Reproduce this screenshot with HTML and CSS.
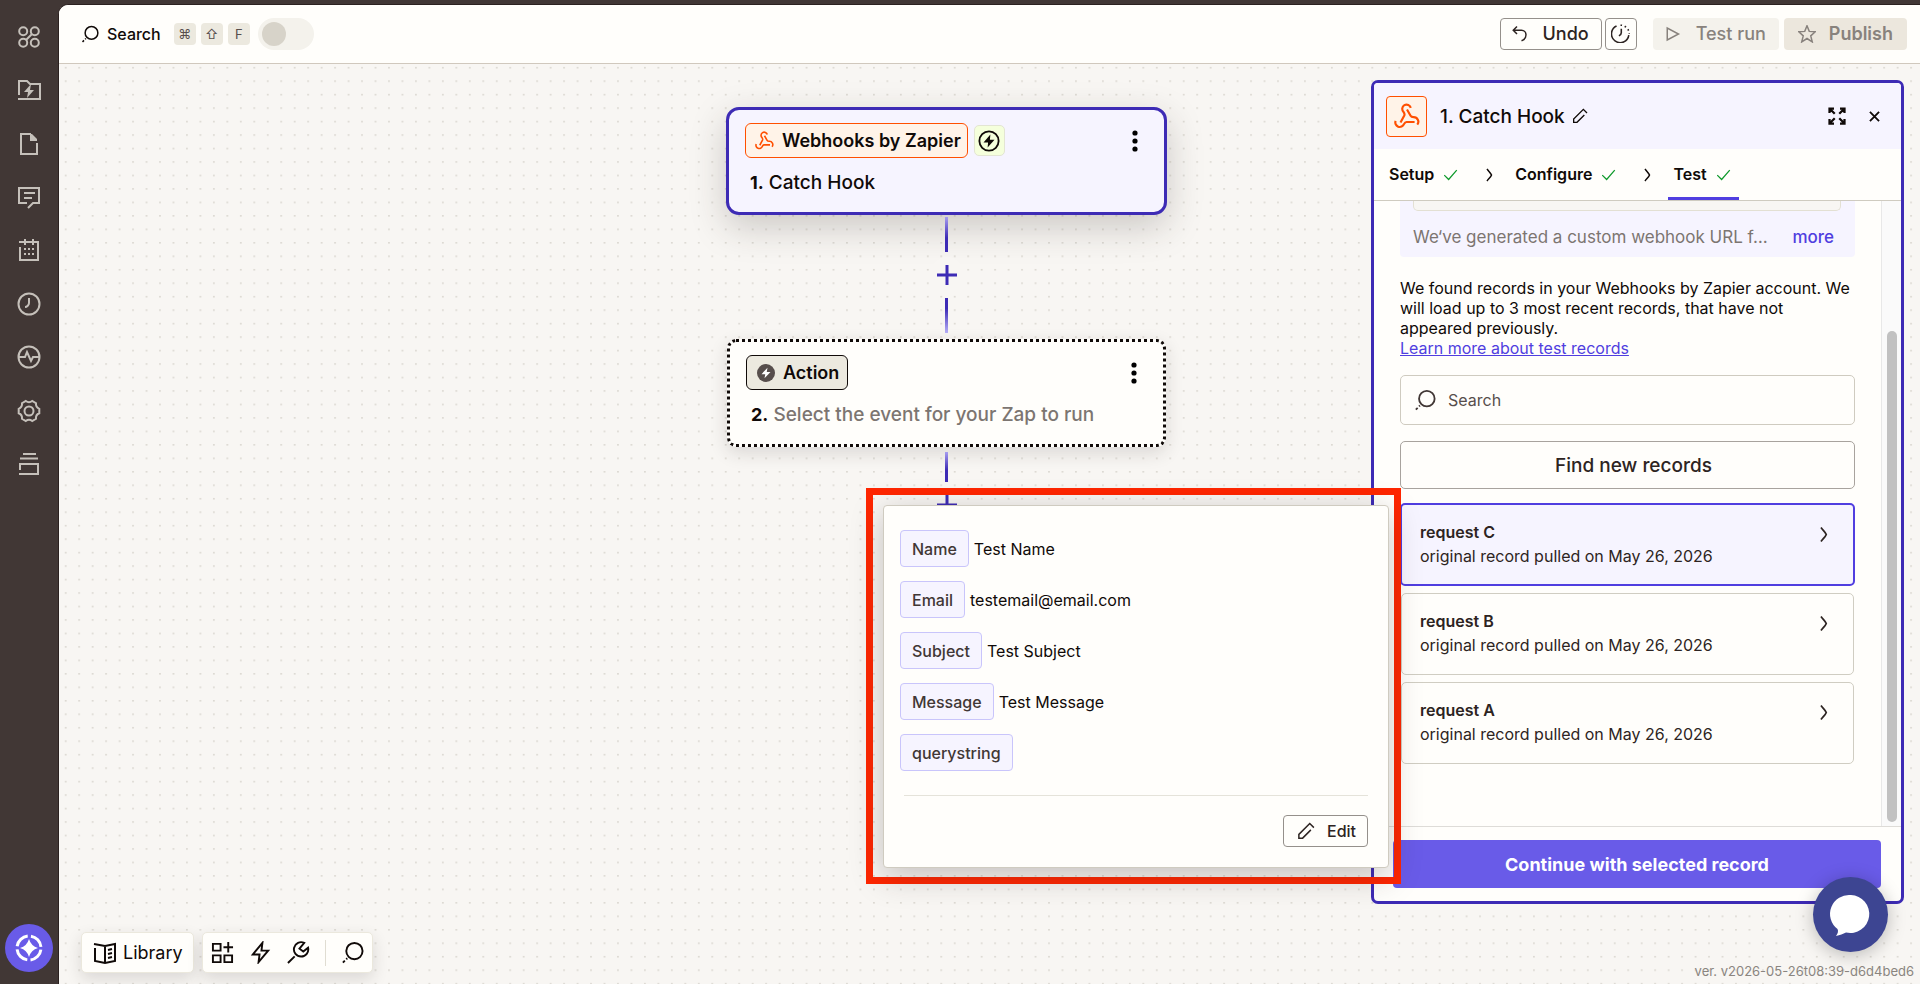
FILE: index.html
```html
<!DOCTYPE html>
<html lang="en">
  <head>
    <meta charset="utf-8" />
    <meta name="viewport" content="width=device-width, initial-scale=1" />
    <title>Zap editor</title>
    <link rel="stylesheet" href="styles.css">
  </head>
  <body>
    <!-- shared icons -->
    <svg class="sprite" aria-hidden="true">
      <symbol id="i-search" viewBox="0 0 24 24">
        <circle cx="14" cy="10.500" r="8.500" /><path d="M2 22.500l2-2M5.500 19l1-1" />
      </symbol>
      <symbol id="i-check" viewBox="0 0 24 24"><path d="M2 13l7 7L22 5" /></symbol>
      <symbol id="i-chevron" viewBox="0 0 24 24"><path d="M8 4c2 3 5 5 6 8-1 3-4 5-6 8" /></symbol>
      <symbol id="i-pencil" viewBox="0 0 24 24">
        <path d="M22.500 7.500l-5.500-5.500L2.500 16.500v5h5L18.500 10.500" />
      </symbol>
      <symbol id="i-plus" viewBox="0 0 20 20"><path d="M10 0v20M0 10h20" /></symbol>
      <symbol id="i-dots" viewBox="0 0 6 22">
        <circle cx="3" cy="3" r="2.600" /><circle cx="3" cy="11" r="2.600" /><circle cx="3" cy="19" r="2.600" />
      </symbol>
      <symbol id="i-webhook" viewBox="0 0 24 24">
        <path d="M19 17.500h-7.500c-1 0-1.800 1-2.300 2A4 4 0 0 1 1.500 16.500" />
        <path d="M6 18l3.500-6.500c.5-1 0-2.200-.6-3.100A4 4 0 1 1 15.500 4.500" />
        <path d="M12 6l3.300 5.800c.5.900 1.700 1.200 2.700 1.200a4.300 4.300 0 0 1 3.500 7" />
      </symbol>
    </svg>

    <div class="app">
      <aside class="sidebar">
        <nav class="sidebar-nav">
          <a href="#" aria-label="Home">
            <svg class="icon" viewBox="0 0 24 24"><circle cx="6.200" cy="6.200" r="4" /><circle cx="17.800" cy="6.200" r="4" /><circle cx="6.200" cy="17.800" r="4" /><circle cx="17.800" cy="17.800" r="4" /><path d="M9 15l6-6" /></svg>
          </a>
          <a href="#" aria-label="Zaps">
            <svg class="icon" viewBox="0 0 24 24"><path d="M2 17V3h8l3 3h10v15H1" /><path class="solid" d="M14 6l-7 8h4l-1 6 7-8h-4z" /></svg>
          </a>
          <a href="#" aria-label="Drafts">
            <svg class="icon" viewBox="0 0 24 24"><path d="M20 11v11H4V2h10" /><path class="solid" d="M13 2h2l5 5v2h-7z" /></svg>
          </a>
          <a href="#" aria-label="Comments">
            <svg class="icon" viewBox="0 0 24 24"><path d="M10 18H2V3h20v15h-6l-5 5M7 8h11M7 13h8" /></svg>
          </a>
          <a href="#" aria-label="Schedule">
            <svg class="icon" viewBox="0 0 24 24"><path d="M3 9V22h18V4H2M8 1v6M16 1v6" /><path d="M7 11h2M11 11h2M15 11h2M7 16h2M11 16h2M15 16h2" /></svg>
          </a>
          <a href="#" aria-label="History">
            <svg class="icon" viewBox="0 0 24 24"><circle cx="12" cy="12" r="10.500" /><path d="M12 6v5c0 2-2 4-4 4" /></svg>
          </a>
          <a href="#" aria-label="Activity">
            <svg class="icon" viewBox="0 0 24 24"><circle cx="12" cy="12" r="10.500" /><path d="M2 12h6l2-5 4 9 2-4h6" /></svg>
          </a>
          <a href="#" aria-label="Settings">
            <svg class="icon" viewBox="0 0 24 24"><circle cx="12" cy="12" r="4.500" /><path d="M22.300 9.800v4.400Q18.500 15.700 19 19.800L15.200 22Q12 19.500 8.800 22L5 19.800Q5.500 15.700 1.700 14.200V9.800Q5.500 8.200 5 4.200L8.800 2Q12 4.500 15.200 2L19 4.200Q18.500 8.200 22.300 9.800z" /></svg>
          </a>
          <a href="#" aria-label="Archive">
            <svg class="icon" viewBox="0 0 24 24"><path d="M6 2h13M3 6.500h18M3 18v-6h18v10H2" /></svg>
          </a>
        </nav>
        <button class="assistant" aria-label="Assistant">
          <svg viewBox="0 0 28 28"><circle cx="14" cy="14" r="12" fill="none" stroke="currentColor" stroke-width="3" stroke-dasharray="15.500 3.350" stroke-dashoffset="-1.650" /><path fill="currentColor" d="M14 5q2 7 9 9-7 2-9 9-2-7-9-9 7-2 9-9z" /></svg>
        </button>
      </aside>

      <main class="main">
        <header class="topbar">
          <button class="find">
            <svg class="icon"><use href="#i-search" /></svg>
            Search
          </button>
          <div class="keys"><kbd>⌘</kbd><kbd>⇧</kbd><kbd>F</kbd></div>
          <input class="toggle" type="checkbox" aria-label="Publish Zap" />
          <div class="actions">
            <button class="btn outline undo">
              <svg class="icon" viewBox="0 0 24 24"><path d="M8 2L3 7l5 5M3 7h11a6 6 0 0 1 6 6c0 4-3 7-6 8" /></svg>
              Undo
            </button>
            <button class="btn outline square" aria-label="Version history">
              <svg class="icon" viewBox="0 0 24 24"><path d="M7 2.500A11 11 0 1 0 22.500 14" /><path d="M13 6v5c0 2-1 3-3 4" /><path stroke-dasharray="2 3.500" d="M12 1.500a11 11 0 0 1 11 11" /></svg>
            </button>
            <button class="btn test" disabled>
              <svg class="icon" viewBox="0 0 24 24"><path d="M3 4v16l15-8z" /></svg>
              Test run
            </button>
            <button class="btn publish" disabled>
              <svg class="icon" viewBox="0 0 24 24"><path d="M12 1l3 7.500 8 .5-6 5.500 2 8-7-4.500-7 4.500 2-8L1 9l8-.5z" /></svg>
              Publish
            </button>
          </div>
        </header>

        <div class="canvas">
          <svg class="grid" aria-hidden="true">
            <defs>
              <pattern id="dots" width="13.470" height="13.470" patternUnits="userSpaceOnUse">
                <rect x="6" y="3" width="1.400" height="1.400" fill="#cfcbc3" />
              </pattern>
            </defs>
            <rect width="100%" height="100%" fill="url(#dots)" />
          </svg>

          <section class="flow">
            <article class="step selected">
              <div class="step-top">
                <span class="app-tag webhook"><svg class="icon"><use href="#i-webhook" /></svg>Webhooks by Zapier</span>
                <span class="instant">
                  <svg viewBox="0 0 24 24"><circle cx="12" cy="12" r="10.500" fill="none" stroke="currentColor" stroke-width="2" /><path fill="currentColor" d="M13.500 5L6 13.500h5L10.500 19 18 10.500h-5z" /></svg>
                </span>
                <button class="menu" aria-label="Step 1 menu"><svg><use href="#i-dots" /></svg></button>
              </div>
              <h2 class="step-title"><b>1.</b> Catch Hook</h2>
            </article>

            <div class="connector">
              <span class="line"></span>
              <button class="add" aria-label="Add step"><svg><use href="#i-plus" /></svg></button>
              <span class="line down"></span>
            </div>

            <article class="step empty">
              <div class="step-top">
                <span class="app-tag action">
                  <svg class="badge" viewBox="0 0 24 24"><circle cx="12" cy="12" r="12" fill="#574e4c" /><path fill="#fff" d="M14 5l-8 8.500h5L10 19l8-8.500h-5z" /></svg>
                  Action
                </span>
                <button class="menu" aria-label="Step 2 menu"><svg><use href="#i-dots" /></svg></button>
              </div>
              <h2 class="step-title"><b>2.</b> <span>Select the event for your Zap to run</span></h2>
            </article>

            <div class="connector last">
              <span class="line"></span>
              <button class="add" aria-label="Add step at end"><svg><use href="#i-plus" /></svg></button>
            </div>
          </section>

          <section class="panel">
            <header class="panel-head">
              <span class="panel-logo"><svg class="icon"><use href="#i-webhook" /></svg></span>
              <h2>1. Catch Hook</h2>
              <button class="rename" aria-label="Rename"><svg class="icon"><use href="#i-pencil" /></svg></button>
              <button class="expand" aria-label="Expand">
                <svg class="icon" viewBox="0 0 24 24"><path d="M8 2H2v6M2 2l7 7M16 2h6v6M22 2l-7 7M8 22H2v-6M2 22l7-7M16 22h6v-6M22 22l-7-7" /></svg>
              </button>
              <button class="close" aria-label="Close"><svg class="icon" viewBox="0 0 12 12"><path d="M1 1l10 10M11 1L1 11" /></svg></button>
            </header>

            <nav class="tabs">
              <a href="#">Setup <svg class="icon ok"><use href="#i-check" /></svg></a>
              <svg class="icon sep"><use href="#i-chevron" /></svg>
              <a href="#">Configure <svg class="icon ok"><use href="#i-check" /></svg></a>
              <svg class="icon sep"><use href="#i-chevron" /></svg>
              <a href="#" class="active">Test <svg class="icon ok"><use href="#i-check" /></svg></a>
            </nav>

            <div class="panel-body">
              <div class="content">
                <div class="hint">
                  <div class="url-box"></div>
                  <div class="hint-row">
                    <p>We‘ve generated a custom webhook URL f…</p>
                    <button class="more">more</button>
                  </div>
                </div>
                <p class="intro">We found records in your Webhooks by Zapier account. We will load up to 3 most recent records, that have not appeared previously.<br /><a href="#">Learn more about test records</a></p>

                <label class="record-search">
                  <svg class="icon"><use href="#i-search" /></svg>
                  <input type="search" placeholder="Search" aria-label="Search records" />
                </label>
                <button class="find-new">Find new records</button>

                <div class="records">
                  <button class="record current">
                    <span><b>request C</b>original record pulled on May 26, 2026</span>
                    <svg class="icon"><use href="#i-chevron" /></svg>
                  </button>
                  <button class="record">
                    <span><b>request B</b>original record pulled on May 26, 2026</span>
                    <svg class="icon"><use href="#i-chevron" /></svg>
                  </button>
                  <button class="record">
                    <span><b>request A</b>original record pulled on May 26, 2026</span>
                    <svg class="icon"><use href="#i-chevron" /></svg>
                  </button>
                </div>
              </div>
              <div class="scrollbar"><div class="thumb"></div></div>
            </div>

            <footer class="panel-foot">
              <button class="continue">Continue with selected record</button>
            </footer>
          </section>

          <!-- record preview -->
          <div class="highlight">
            <div class="preview">
              <dl>
                <div><dt>Name</dt><dd>Test Name</dd></div>
                <div><dt>Email</dt><dd>testemail@email.com</dd></div>
                <div><dt>Subject</dt><dd>Test Subject</dd></div>
                <div><dt>Message</dt><dd>Test Message</dd></div>
                <div><dt>querystring</dt><dd></dd></div>
              </dl>
              <div class="preview-foot">
                <button class="edit"><svg class="icon"><use href="#i-pencil" /></svg>Edit</button>
              </div>
            </div>
          </div>

          <div class="dock">
            <button class="library">
              <svg class="icon" viewBox="0 0 24 24"><path d="M12 4v18M2 7v13l10 2 10-2V3l-10 2L1 3M15 9l4-1M15 13l4-1M15 17l4-1" /></svg>
              Library
            </button>
            <div class="tools">
              <button aria-label="Add block"><svg class="icon" viewBox="0 0 24 24"><path d="M2 3h8v7H2zM2 15h8v7H2zM14 15h8v7h-8zM18 1v11M13 6.500h10" /></svg></button>
              <button aria-label="Triggers"><svg class="icon" viewBox="0 0 24 24"><path d="M14 2L4 14h7l-1 8 10-12h-7z" /></svg></button>
              <button aria-label="Tools"><svg class="icon" viewBox="0 0 24 24"><path d="M1 23l7-7M18 2a7.500 7.500 0 1 0 4 5l-5 4-4-3z" /></svg></button>
              <span class="rule"></span>
              <button aria-label="Find on canvas"><svg class="icon"><use href="#i-search" /></svg></button>
            </div>
          </div>

          <button class="chat" aria-label="Open chat">
            <svg viewBox="0 0 40 40"><path fill="#fff" d="M20 0a19 19 0 1 1-5 37.500C12 39 9 40 5 41c2-3 2.500-5 1.500-7A19 19 0 0 1 20 0z" /></svg>
          </button>
          <small class="version">ver. v2026-05-26t08:39-d6d4bed6</small>
        </div>
      </main>
    </div>
  </body>
</html>
```
FILE: styles.css
```css
* {
  box-sizing: border-box;
}

body {
  margin: 0;
  font-family: Inter, "Liberation Sans", sans-serif;
  font-size: 16px;
  color: #100a08;
  background: #413735;
}

h2,
p,
dl,
dd {
  margin: 0;
}

button {
  font: inherit;
  color: inherit;
  background: none;
  border: none;
  padding: 0;
  cursor: pointer;
}

.sprite {
  display: none;
}

.icon {
  display: block;
  flex: none;
  fill: none;
  stroke: currentColor;
  stroke-width: 2;
}

.icon .solid {
  fill: currentColor;
  stroke: none;
}

.app {
  display: flex;
  height: 100vh;
}

/* Sidebar */
.sidebar {
  width: 58px;
  display: flex;
  flex-direction: column;
  justify-content: space-between;
  align-items: center;
  padding: 10px 0 12px;
}

.sidebar-nav {
  display: grid;
  height: 481px;
  grid-auto-rows: 1fr;
  align-items: center;
  color: #c5c0ba;
}

.sidebar-nav a {
  color: inherit;
}

.sidebar-nav .icon {
  width: 24px;
  height: 24px;
}

.assistant {
  width: 48px;
  height: 48px;
  border-radius: 50%;
  background: #695be8;
  color: #fff;
  display: grid;
  place-items: center;
}

.assistant svg {
  width: 28px;
  height: 28px;
}

/* Main column */
.main {
  flex: 1;
  min-width: 0;
  margin-top: 4px;
  display: flex;
  flex-direction: column;
  border-top: 1px solid #2b2120;
  border-left: 1px solid #2b2120;
  border-top-left-radius: 10px;
  overflow: hidden;
  background: #f8f6f3;
}

.topbar {
  display: flex;
  align-items: center;
  height: 59px;
  padding: 0 13px 1px 22px;
  background: #fffefb;
  border-bottom: 1px solid #d0c8bd;
}

.find {
  display: flex;
  align-items: center;
  gap: 8px;
  font-weight: 500;
  margin-right: 13px;
}

.find .icon {
  width: 18px;
  height: 18px;
}

.keys {
  display: flex;
  gap: 5px;
  margin-right: 8px;
}

kbd {
  width: 22px;
  height: 22px;
  border-radius: 4px;
  background: #ece9df;
  color: #574e4c;
  font-family: Inter, "DejaVu Sans", sans-serif;
  font-size: 13px;
  line-height: 22px;
  text-align: center;
}

.toggle {
  appearance: none;
  width: 56px;
  height: 32px;
  margin: 0;
  padding: 4px;
  border-radius: 16px;
  background: #f4f2ec;
}

.toggle::before {
  content: "";
  display: block;
  width: 24px;
  height: 24px;
  border-radius: 50%;
  background: #d7d3c9;
}

.actions {
  display: flex;
  margin-left: auto;
}

.btn {
  display: flex;
  align-items: center;
  justify-content: center;
  gap: 13px;
  height: 32px;
  padding: 0 12px;
  border-radius: 4px;
  font-size: 18px;
  font-weight: 500;
}

.btn .icon {
  width: 18px;
  height: 18px;
}

.outline {
  border: 1px solid #95908b;
  background: #fffefb;
  color: #2d2422;
}

.undo {
  padding: 0 12px 0 10px;
}

.square {
  width: 32px;
  padding: 0;
  margin: 0 16px 0 3px;
}

.square .icon {
  width: 19px;
  height: 19px;
}

.test,
.publish {
  color: #88827d;
  background: #f4f2ec;
}

.test {
  padding: 0 13px 0 12px;
}

.publish {
  margin-left: 5px;
  padding: 0 14px;
  background: #ece7dd;
  font-weight: 600;
}

/* Canvas */
.canvas {
  position: relative;
  flex: 1;
  min-height: 0;
  display: flex;
  justify-content: flex-end;
  padding: 16px 16px 80px;
}

.grid {
  position: absolute;
  inset: 0;
  width: 100%;
  height: 100%;
}

.flow {
  position: absolute;
  top: 43px;
  left: 667px;
  width: 441px;
  display: flex;
  flex-direction: column;
  align-items: center;
}

.step {
  height: 108px;
  padding: 13px 17px 0 16px;
  border-radius: 13px;
}

.selected {
  width: 441px;
  border: 3px solid #3d2bb5;
  background: #f6f4ff;
  box-shadow: 0 12px 36px rgba(45, 36, 34, 0.22);
}

.empty {
  width: 439px;
  border: 3px dotted #100a08;
  border-radius: 9px;
  background: #fffefb;
  box-shadow: 0 6px 18px rgba(45, 36, 34, 0.14);
}

.step-top {
  display: flex;
  align-items: center;
}

.app-tag {
  display: flex;
  align-items: center;
  gap: 8px;
  height: 35px;
  padding: 0 8px 0 10px;
  border: 1px solid #100a08;
  border-radius: 6px;
  font-size: 18px;
  font-weight: 600;
}

.webhook {
  padding: 0 6px 0 9px;
  border-color: #ff4f00;
  background: #fff3e8;
}

.webhook .icon {
  width: 19px;
  height: 19px;
  color: #ff4f00;
}

.action {
  background: #ece9df;
}

.badge {
  width: 18px;
  height: 18px;
}

.instant {
  display: grid;
  place-items: center;
  width: 31px;
  height: 31px;
  margin-left: 6px;
  border: 1px solid #e3e5d3;
  border-radius: 5px;
  background: #f5ffdc;
}

.instant svg {
  width: 22px;
  height: 22px;
}

.menu {
  width: 6px;
  height: 22px;
  margin: 0 9px 0 auto;
}

.menu svg {
  display: block;
  width: 6px;
  height: 22px;
}

.step-title {
  margin: 14px 0 0 5px;
  font-size: 19px;
  line-height: 22px;
  font-weight: 500;
}

.step-title b {
  font-size: 18px;
  font-weight: 700;
}

.step-title span {
  color: #7c7571;
}

.connector {
  display: flex;
  flex-direction: column;
  align-items: center;
  justify-content: space-between;
  height: 124px;
  padding: 2px 0 6px;
}

.line {
  width: 3px;
  height: 35px;
  background: linear-gradient(#a79df0, #3d2bb5 60%);
}

.line.down {
  background: linear-gradient(#3d2bb5 30%, #b7b0f8);
}

.add {
  display: grid;
  place-items: center;
  width: 36px;
  height: 36px;
  border-radius: 50%;
  background: #f8f6f3;
}

.add svg {
  width: 20px;
  height: 20px;
  stroke: #3d2bb5;
  stroke-width: 3;
}

.last {
  height: 76px;
  padding: 5px 0 0;
}

.last .line {
  height: 30px;
}

/* Step panel */
.panel {
  position: relative;
  width: 533px;
  display: flex;
  flex-direction: column;
  border: 3px solid #3d2bb5;
  border-radius: 7px;
  background: #fffefb;
  overflow: hidden;
}

.panel-head {
  display: flex;
  align-items: center;
  height: 66px;
  padding: 0 21px 0 12px;
  background: #f6f4ff;
}

.panel-head h2 {
  margin: 0 7px 0 13px;
  font-size: 19px;
  font-weight: 500;
}

.panel-logo {
  display: grid;
  place-items: center;
  width: 41px;
  height: 41px;
  border: 1px solid #ff4f00;
  border-radius: 4px;
  background: #fff3e8;
  color: #ff4f00;
}

.panel-logo .icon {
  width: 26px;
  height: 26px;
}

.rename .icon {
  width: 16px;
  height: 16px;
}

.expand {
  margin: 0 23px 0 auto;
}

.expand .icon {
  width: 18px;
  height: 18px;
  stroke-width: 3;
}

.close .icon {
  width: 11px;
  height: 11px;
}

.tabs {
  display: flex;
  align-items: center;
  height: 52px;
  padding-left: 10px;
  border-bottom: 1px solid #cfcbc0;
}

.tabs a {
  display: flex;
  align-items: center;
  gap: 9px;
  height: 51px;
  padding: 2px 8px 0 5px;
  border-bottom: 3px solid transparent;
  color: inherit;
  font-weight: 600;
  text-decoration: none;
}

.tabs .active {
  border-color: #503ee0;
}

.ok {
  width: 15px;
  height: 15px;
  color: #0f9a2c;
}

.sep {
  width: 18px;
  height: 18px;
  margin: 0 11px 0 15px;
}

.panel-body {
  flex: 1;
  min-height: 0;
  display: flex;
}

.content {
  flex: 1;
  padding: 0 26px;
}

.hint {
  height: 56px;
  padding: 0 14px 0 13px;
  border-radius: 0 0 4px 4px;
  background: #f6f4ff;
}

.url-box {
  height: 10px;
  border: 1px solid #e3e0d3;
  border-top: none;
  border-radius: 0 0 5px 5px;
  background: #f8f6f3;
}

.hint-row {
  display: flex;
  justify-content: space-between;
  padding: 16px 7px 0 0;
  font-size: 17px;
  line-height: 20px;
}

.hint-row p {
  white-space: nowrap;
  color: #7c7571;
}

.more {
  line-height: 20px;
  font-weight: 500;
  color: #503ee0;
}

.intro {
  margin-top: 21px;
  line-height: 20px;
}

.intro a {
  color: #503ee0;
}

.record-search {
  display: flex;
  align-items: center;
  gap: 12px;
  height: 50px;
  margin-top: 17px;
  padding: 0 13px;
  border: 1px solid #cfcbc0;
  border-radius: 5px;
}

.record-search .icon {
  width: 22px;
  height: 22px;
  color: #413735;
}

.record-search input {
  flex: 1;
  padding: 0;
  border: none;
  outline: none;
  background: none;
  font: inherit;
}

.record-search input::placeholder {
  color: #574e4c;
  opacity: 1;
}

.find-new {
  width: 100%;
  height: 48px;
  margin: 16px 0 14px;
  padding-left: 12px;
  border: 1px solid #a8a39e;
  border-radius: 5px;
  color: #2d2422;
  font-size: 19px;
  font-weight: 500;
}

.records {
  display: flex;
  flex-direction: column;
  gap: 7px;
}

.record {
  display: flex;
  justify-content: space-between;
  height: 82px;
  margin: 0 1px;
  padding: 15px 18px 0 18px;
  border: 1px solid #d0cdc2;
  border-radius: 5px;
  line-height: 24px;
  text-align: left;
  color: #2d2422;
}

.record.current {
  height: 83px;
  margin: 0;
  padding: 15px 18px 0 18px;
  border: 2px solid #503ee0;
  background: #f6f4ff;
}

.record b {
  display: block;
  font-weight: 600;
}

.record .icon {
  width: 21px;
  height: 21px;
  margin-top: 4px;
}

.scrollbar {
  width: 20px;
  padding: 130px 4px 4px 5px;
  border-left: 1px solid #e8e8e8;
  background: #fafafa;
}

.thumb {
  height: 100%;
  border-radius: 5px;
  background: #c1c1c1;
}

.panel-foot {
  padding: 13px 20px 13px 19px;
  border-top: 1px solid #dedcd8;
}

.continue {
  width: 100%;
  height: 48px;
  border-radius: 4px;
  background: #695be8;
  color: #fff;
  font-size: 18px;
  font-weight: 700;
}

/* Record preview */
.highlight {
  position: absolute;
  top: 424px;
  left: 807px;
  width: 535px;
  padding: 10px 5px 9px 10px;
  border: 7px solid #ff2600;
}

.preview {
  padding: 24px 20px 20px 16px;
  border: 1px solid #cfcbc0;
  border-radius: 4px;
  background: #fffefb;
  box-shadow: 0 8px 32px rgba(45, 36, 34, 0.26);
}

.preview dl {
  display: flex;
  flex-direction: column;
  gap: 14px;
}

.preview dl div {
  display: flex;
  align-items: center;
  gap: 5px;
}

.preview dt {
  height: 37px;
  padding: 0 11px;
  border: 1px solid #c9c5fb;
  border-radius: 4px;
  background: #f6f4ff;
  color: #413735;
  line-height: 36px;
  font-weight: 500;
}

.preview-foot {
  display: flex;
  justify-content: flex-end;
  margin: 24px 0 0 4px;
  padding-top: 19px;
  border-top: 1px solid #e5e3da;
}

.edit {
  display: flex;
  align-items: center;
  gap: 12px;
  height: 32px;
  padding: 0 11px 0 13px;
  border: 1px solid #95908b;
  border-radius: 4px;
  color: #2d2422;
  font-weight: 500;
}

.edit .icon {
  width: 18px;
  height: 18px;
}

/* Bottom toolbar */
.dock {
  position: absolute;
  left: 22px;
  bottom: 11px;
  display: flex;
  gap: 8px;
}

.library,
.tools {
  display: flex;
  align-items: center;
  height: 41px;
  border: 1px solid #ebe8dd;
  border-radius: 5px;
  background: #fffefb;
  box-shadow: 0 6px 16px rgba(45, 36, 34, 0.14);
}

.library {
  gap: 6px;
  padding: 0 10px 0 11px;
  font-size: 18px;
}

.dock .icon {
  width: 24px;
  height: 24px;
}

.tools {
  gap: 15px;
  padding: 0 8px;
}

.tools .rule {
  width: 1px;
  height: 26px;
  background: #e0ddd2;
}

.tools .icon {
  width: 23px;
  height: 23px;
}

.chat {
  position: absolute;
  right: 32px;
  bottom: 32px;
  display: grid;
  place-items: center;
  width: 75px;
  height: 75px;
  border-radius: 50%;
  background: #3d4592;
  box-shadow: 0 3px 18px rgba(0, 0, 0, 0.25);
}

.chat svg {
  width: 40px;
  height: 40px;
  overflow: visible;
}

.version {
  position: absolute;
  right: 6px;
  bottom: 5px;
  color: #8a8580;
  font-size: 13px;
}
```
